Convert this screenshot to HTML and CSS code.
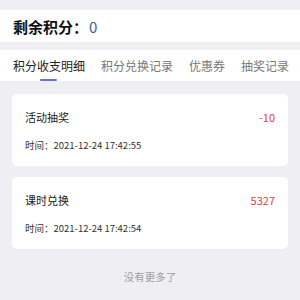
FILE: index.html
```html
<!DOCTYPE html>
<html lang="zh">
<head>
<meta charset="utf-8">
<link rel="stylesheet" href="styles.css">
</head>
<body>
<div class="page">
  <div class="header">
    <span class="label">剩余积分：</span><span class="points">0</span>
  </div>
  <div class="tabs">
    <div class="tab active">积分收支明细</div>
    <div class="tab">积分兑换记录</div>
    <div class="tab">优惠券</div>
    <div class="tab">抽奖记录</div>
  </div>
  <div class="list">
    <div class="card">
      <div class="row">
        <span class="title">活动抽奖</span>
        <span class="amount">-10</span>
      </div>
      <div class="time">时间：2021-12-24 17:42:55</div>
    </div>
    <div class="card">
      <div class="row">
        <span class="title">课时兑换</span>
        <span class="amount">5327</span>
      </div>
      <div class="time">时间：2021-12-24 17:42:54</div>
    </div>
    <div class="more">没有更多了</div>
  </div>
</div>
</body>
</html>
```
FILE: styles.css
```css
html, body {
  margin: 0;
  padding: 0;
  background: #efeff3;
  font-family: "Noto Sans CJK SC", "Noto Sans", sans-serif;
}
.page {
  width: 300px;
  height: 300px;
  overflow: hidden;
  padding-top: 10px;
  box-sizing: border-box;
}
.header {
  background: #fff;
  height: 32px;
  display: flex;
  align-items: center;
  padding-left: 13px;
}
.label {
  font-size: 15px;
  font-weight: bold;
  color: #111;
}
.points {
  font-size: 15px;
  color: #3d5f9e;
  margin-left: 1px;
}
.tabs {
  margin-top: 8px;
  background: #fff;
  height: 31px;
  display: flex;
  gap: 16px;
  padding-left: 13px;
  white-space: nowrap;
}
.tab {
  position: relative;
  font-size: 12px;
  color: #777;
  line-height: 31px;
  height: 31px;
}
.tab.active {
  color: #222;
}
.tab.active::after {
  content: "";
  position: absolute;
  left: 27px;
  bottom: 0;
  width: 17px;
  height: 2px;
  background: #5a78d2;
  border-radius: 1px;
}
.list {
  padding: 13px 12px 0;
}
.card {
  background: #fff;
  border-radius: 5px;
  padding: 14px 13px 13px;
  margin-bottom: 11px;
}
.row {
  display: flex;
  justify-content: space-between;
  align-items: center;
  height: 18px;
}
.title {
  font-size: 11px;
  color: #222;
}
.amount {
  font-size: 11px;
  color: #e0413a;
}
.time {
  margin-top: 11px;
  font-size: 9.5px;
  line-height: 16px;
  color: #333;
}
.more {
  text-align: center;
  font-size: 10.5px;
  line-height: 16px;
  color: #a0a0a0;
  margin-top: 20px;
}
```
